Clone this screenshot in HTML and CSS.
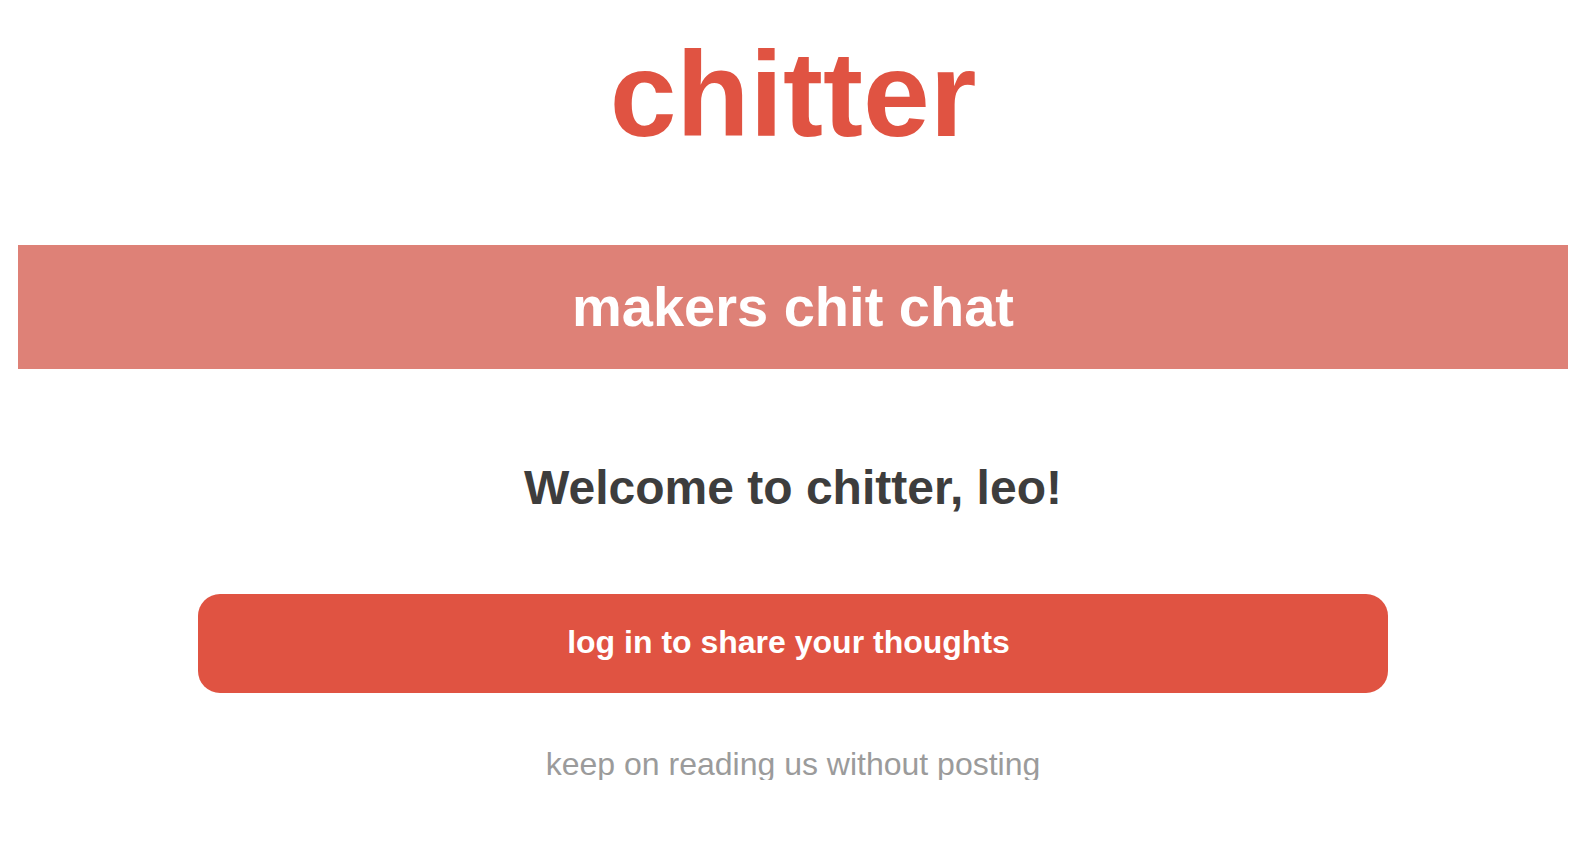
FILE: index.html
```html
<!DOCTYPE html>
<html lang="en">
<head>
<meta charset="utf-8">
<title>chitter</title>
<link rel="stylesheet" href="styles.css">
</head>
<body>
<div class="page">
  <h1 class="logo">chitter</h1>
  <div class="banner">makers chit chat</div>
  <h2 class="welcome">Welcome to chitter, leo!</h2>
  <a class="login-btn" href="#">log in to share your thoughts</a>
  <a class="read-link" href="#">keep on reading us without posting</a>
</div>
</body>
</html>
```
FILE: styles.css
```css
html, body {
  margin: 0;
  padding: 0;
  background: #ffffff;
}
body {
  font-family: "Liberation Sans", Arial, Helvetica, sans-serif;
}
.page {
  width: 1550px;
  margin-left: 18px;
  display: flex;
  flex-direction: column;
  align-items: center;
  padding-top: 34px;
}
.logo {
  margin: 0;
  font-size: 120px;
  line-height: 120px;
  font-weight: 700;
  color: #e05342;
}
.banner {
  margin-top: 91px;
  align-self: stretch;
  height: 124px;
  line-height: 124px;
  background: #de8177;
  color: #ffffff;
  font-size: 56px;
  font-weight: 700;
  text-align: center;
}
.welcome {
  margin: 95px 0 0;
  font-size: 48px;
  line-height: 48px;
  font-weight: 700;
  color: #3d3d3d;
}
.login-btn {
  box-sizing: border-box;
  margin-top: 82px;
  width: 1190px;
  height: 99px;
  padding-right: 9px;
  line-height: 97px;
  border-radius: 22px;
  background: #e05342;
  color: #ffffff;
  font-size: 32px;
  font-weight: 700;
  text-align: center;
  text-decoration: none;
}
.read-link {
  margin-top: 55px;
  font-size: 32px;
  line-height: 32px;
  color: #9b9b9b;
  text-decoration: none;
}
```
